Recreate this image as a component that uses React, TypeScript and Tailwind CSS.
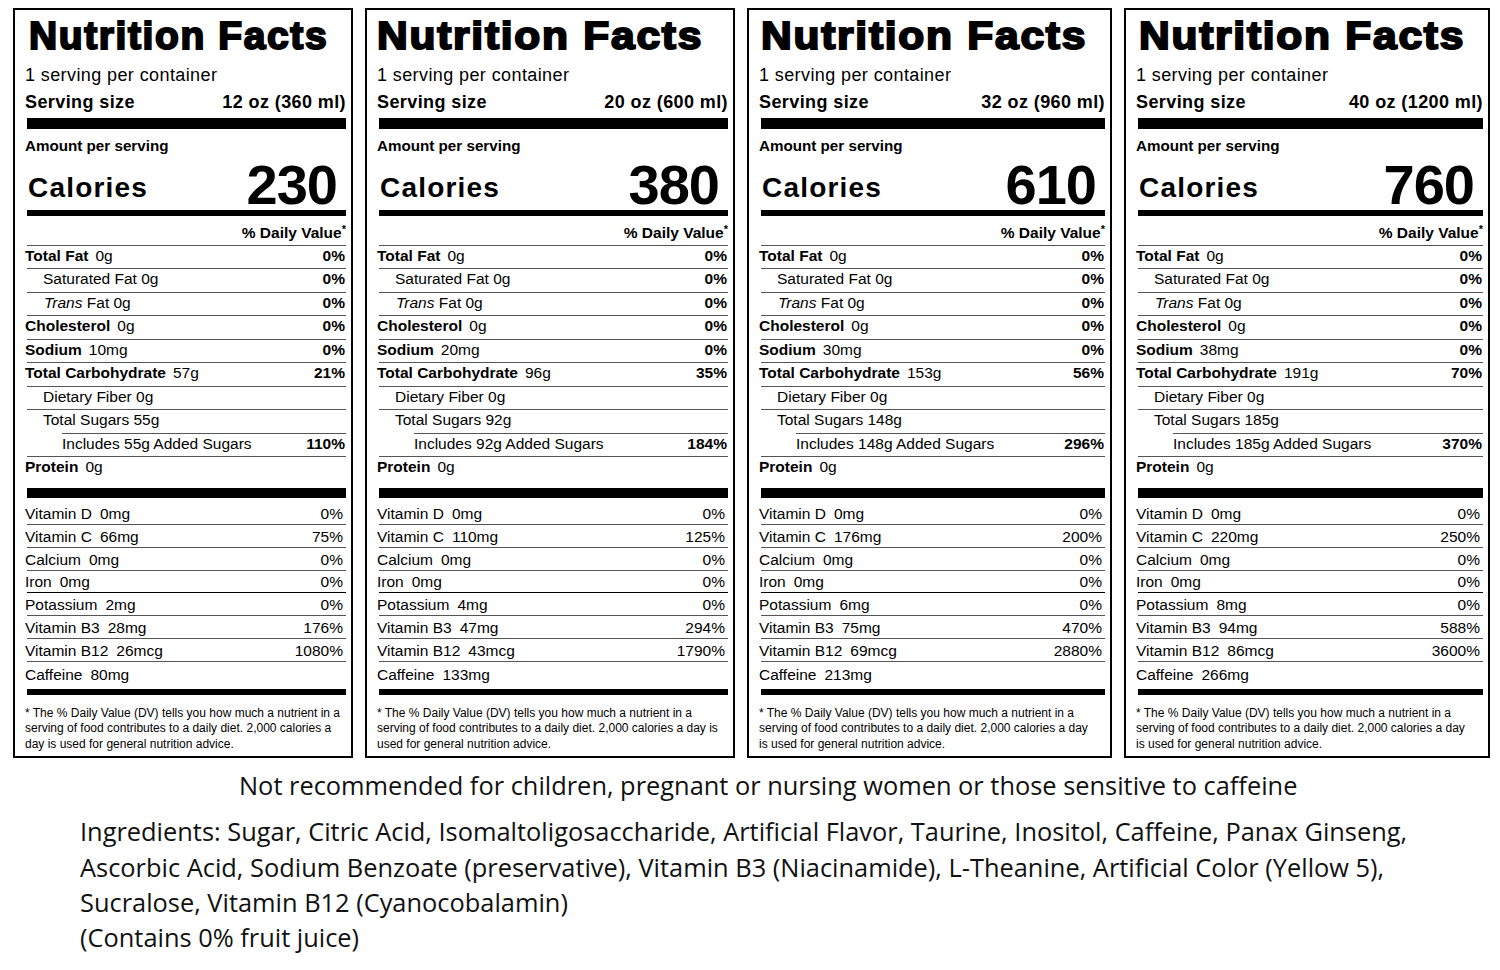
import React from "react";

type TLabel = {
  id: number;
  box: string;
  headClass: string;
  serving: string;
  calories: string;
  sodium: string;
  carb: string;
  carbPct: string;
  sugars: string;
  added: string;
  addedPct: string;
  vitC: string;
  vitCPct: string;
  potassium: string;
  b3: string;
  b3Pct: string;
  b12: string;
  b12Pct: string;
  caffeine: string;
  foot: string[];
};

const FOOT1 = "* The % Daily Value (DV) tells you how much a nutrient in a";

const labels: TLabel[] = [
  {
    id: 1,
    box: "w-[340px]",
    headClass: "ml-[4px]",
    serving: "12 oz (360 ml)",
    calories: "230",
    sodium: "10mg",
    carb: "57g",
    carbPct: "21%",
    sugars: "55g",
    added: "55g",
    addedPct: "110%",
    vitC: "66mg",
    vitCPct: "75%",
    potassium: "2mg",
    b3: "28mg",
    b3Pct: "176%",
    b12: "26mcg",
    b12Pct: "1080%",
    caffeine: "80mg",
    foot: [FOOT1, "serving of food contributes to a daily diet. 2,000 calories a", "day is used for general nutrition advice."],
  },
  {
    id: 2,
    box: "w-[370px]",
    headClass: "ml-0 scale-x-[1.09]",
    serving: "20 oz (600 ml)",
    calories: "380",
    sodium: "20mg",
    carb: "96g",
    carbPct: "35%",
    sugars: "92g",
    added: "92g",
    addedPct: "184%",
    vitC: "110mg",
    vitCPct: "125%",
    potassium: "4mg",
    b3: "47mg",
    b3Pct: "294%",
    b12: "43mcg",
    b12Pct: "1790%",
    caffeine: "133mg",
    foot: [FOOT1, "serving of food contributes to a daily diet. 2,000 calories a day is", "used for general nutrition advice."],
  },
  {
    id: 3,
    box: "w-[365px]",
    headClass: "ml-[2px] scale-x-[1.09]",
    serving: "32 oz (960 ml)",
    calories: "610",
    sodium: "30mg",
    carb: "153g",
    carbPct: "56%",
    sugars: "148g",
    added: "148g",
    addedPct: "296%",
    vitC: "176mg",
    vitCPct: "200%",
    potassium: "6mg",
    b3: "75mg",
    b3Pct: "470%",
    b12: "69mcg",
    b12Pct: "2880%",
    caffeine: "213mg",
    foot: [FOOT1, "serving of food contributes to a daily diet. 2,000 calories a day", "is used for general nutrition advice."],
  },
  {
    id: 4,
    box: "w-[366px]",
    headClass: "ml-[3px] scale-x-[1.09]",
    serving: "40 oz (1200 ml)",
    calories: "760",
    sodium: "38mg",
    carb: "191g",
    carbPct: "70%",
    sugars: "185g",
    added: "185g",
    addedPct: "370%",
    vitC: "220mg",
    vitCPct: "250%",
    potassium: "8mg",
    b3: "94mg",
    b3Pct: "588%",
    b12: "86mcg",
    b12Pct: "3600%",
    caffeine: "266mg",
    foot: [FOOT1, "serving of food contributes to a daily diet. 2,000 calories a day", "is used for general nutrition advice."],
  },
];

const Rule = () => <div className="h-px bg-[#555] ml-[2px]" />;

const NutRow = ({ children, pct }: { children: React.ReactNode; pct?: string }) => (
  <div className="flex h-[22.5px] items-start justify-between text-[15.5px] leading-[19px]">
    <div className="whitespace-nowrap">{children}</div>
    {pct && <span className="font-bold pr-px">{pct}</span>}
  </div>
);

const VitRow = ({ name, amt, pct }: { name: string; amt: string; pct: string }) => (
  <div className="flex h-[21.8px] items-start justify-between pt-[1.8px] text-[15.5px] leading-[19px]">
    <div className="whitespace-nowrap">
      {name}
      <span className="ml-[8px]">{amt}</span>
    </div>
    <span className="pr-[3px]">{pct}</span>
  </div>
);

const Label: React.FC<{ d: TLabel }> = ({ d }) => {
  return (
    <div className={`${d.box} h-[750px] shrink-0 border-2 border-black pl-[10px] pr-[5px] flex flex-col`}>
      <h1
        className={`${d.headClass} mt-[5.5px] h-[40px] origin-left whitespace-nowrap text-[39px] leading-[40px] font-bold tracking-[1.6px] [-webkit-text-stroke:2px_black]`}
      >
        Nutrition Facts
      </h1>
      <div className="mt-[9.8px] text-[18px] leading-[20px] tracking-[0.4px]">1 serving per container</div>
      <div className="mt-[5.5px] flex justify-between text-[18px] leading-[22px] font-bold tracking-[0.4px]">
        <span>Serving size</span>
        <span>{d.serving}</span>
      </div>
      <div className="mt-[5.2px] h-[11px] ml-[2px] bg-black" />
      <div className="mt-[7.8px] text-[15.2px] leading-[18px] font-bold">Amount per serving</div>
      <div className="flex h-[55.2px] items-end justify-between">
        <span className="ml-[3px] mb-[7.5px] text-[28px] leading-[28px] font-bold tracking-[1.2px]">Calories</span>
        <span className="mr-[9px] text-[56px] leading-[50px] font-bold tracking-[-1px]">{d.calories}</span>
      </div>
      <div className="h-[6px] ml-[2px] bg-black" />
      <div className="h-[29px] pt-[8.3px] text-right text-[15.5px] leading-[18px] font-bold">
        % Daily Value<span className="align-top text-[11px] leading-none">*</span>
      </div>
      <Rule />
      <NutRow pct="0%">
        <b>Total Fat</b>
        <span className="ml-[7px]">0g</span>
      </NutRow>
      <Rule />
      <NutRow pct="0%">
        <span className="pl-[18px]">Saturated Fat 0g</span>
      </NutRow>
      <Rule />
      <NutRow pct="0%">
        <span className="pl-[19px]">
          <i>Trans</i> Fat 0g
        </span>
      </NutRow>
      <Rule />
      <NutRow pct="0%">
        <b>Cholesterol</b>
        <span className="ml-[7px]">0g</span>
      </NutRow>
      <Rule />
      <NutRow pct="0%">
        <b>Sodium</b>
        <span className="ml-[7px]">{d.sodium}</span>
      </NutRow>
      <Rule />
      <NutRow pct={d.carbPct}>
        <b>Total Carbohydrate</b>
        <span className="ml-[7px]">{d.carb}</span>
      </NutRow>
      <Rule />
      <NutRow>
        <span className="pl-[18px]">Dietary Fiber 0g</span>
      </NutRow>
      <Rule />
      <NutRow>
        <span className="pl-[18px]">Total Sugars {d.sugars}</span>
      </NutRow>
      <div className="h-px bg-[#555] ml-[37px]" />
      <NutRow pct={d.addedPct}>
        <span className="pl-[37px]">Includes {d.added} Added Sugars</span>
      </NutRow>
      <Rule />
      <div className="h-[30.5px] text-[15.5px] leading-[20px]">
        <b>Protein</b>
        <span className="ml-[7px]">0g</span>
      </div>
      <div className="h-[10px] ml-[2px] bg-black" />
      <div className="flex h-[26px] items-start justify-between pt-[6.4px] text-[15.5px] leading-[19px]">
        <div className="whitespace-nowrap">
          Vitamin D<span className="ml-[8px]">0mg</span>
        </div>
        <span className="pr-[3px]">0%</span>
      </div>
      <Rule />
      <VitRow name="Vitamin C" amt={d.vitC} pct={d.vitCPct} />
      <Rule />
      <VitRow name="Calcium" amt="0mg" pct="0%" />
      <Rule />
      <VitRow name="Iron" amt="0mg" pct="0%" />
      <div className="h-px bg-black ml-[2px]" />
      <VitRow name="Potassium" amt={d.potassium} pct="0%" />
      <Rule />
      <VitRow name="Vitamin B3" amt={d.b3} pct={d.b3Pct} />
      <Rule />
      <VitRow name="Vitamin B12" amt={d.b12} pct={d.b12Pct} />
      <Rule />
      <div className="h-[27.5px] pt-[3.3px] text-[15.5px] leading-[19px]">
        Caffeine<span className="ml-[8px]">{d.caffeine}</span>
      </div>
      <div className="h-[5.5px] ml-[2px] bg-black" />
      <div className="mt-[11px] text-[12px] leading-[15.5px]">
        {d.foot.map((line) => (
          <div key={line} className="whitespace-nowrap">
            {line}
          </div>
        ))}
      </div>
    </div>
  );
};

export default function App() {
  return (
    <div className="w-[1500px] h-[970px] overflow-hidden bg-white text-black font-['Liberation_Sans',Arial,sans-serif]">
      <div className="flex gap-[12px] pl-[13px] pt-[8px]">
        {labels.map((d) => (
          <Label key={d.id} d={d} />
        ))}
      </div>
      <div className="font-['Open_Sans',sans-serif] text-[25.4px] leading-[35.3px] text-[#111]">
        <p className="mt-[9.6px] pl-[239px] whitespace-nowrap">
          Not recommended for children, pregnant or nursing women or those sensitive to caffeine
        </p>
        <div className="mt-[11.5px] pl-[80px] whitespace-nowrap">
          <div>
            Ingredients: Sugar, Citric Acid, Isomaltoligosaccharide, Artificial Flavor, Taurine, Inositol, Caffeine, Panax
            Ginseng,
          </div>
          <div>
            Ascorbic Acid, Sodium Benzoate (preservative), Vitamin B3 (Niacinamide), L-Theanine, Artificial Color (Yellow
            5),
          </div>
          <div>Sucralose, Vitamin B12 (Cyanocobalamin)</div>
          <div>(Contains 0% fruit juice)</div>
        </div>
      </div>
    </div>
  );
}
